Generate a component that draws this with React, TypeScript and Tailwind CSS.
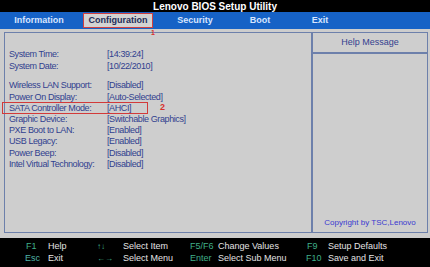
const tabs = [
  { label: 'Information', w: 'w-[78px]', active: false },
  { label: 'Configuration', w: 'w-[70px]', active: true },
  { label: 'Security', w: 'w-[84px]', active: false },
  { label: 'Boot', w: 'w-[46px]', active: false },
  { label: 'Exit', w: 'w-[74px]', active: false },
]

const rowsTop = [
  ['System Time:', '[14:39:24]'],
  ['System Date:', '[10/22/2010]'],
]

const rowsBottom = [
  ['Wireless LAN Support:', '[Disabled]'],
  ['Power On Display:', '[Auto-Selected]'],
  ['SATA Controller Mode:', '[AHCI]'],
  ['Graphic Device:', '[Switchable Graphics]'],
  ['PXE Boot to LAN:', '[Enabled]'],
  ['USB Legacy:', '[Enabled]'],
  ['Power Beep:', '[Disabled]'],
  ['Intel Virtual Technology:', '[Disabled]'],
]

const Row = ({ label, value }: { label: string; value: string }) => {
  const sata = label.startsWith('SATA')
  return (
    <div className="relative flex h-[11.2px] items-center">
      <span className="w-[98px] shrink-0">{label}</span>
      <span>{value}</span>
      {sata && (
        <>
          <div className="absolute left-[-7px] top-[-1px] h-[12px] w-[146px] border border-[#d23a3a]" />
          <span className="absolute left-[151px] top-[0px] text-[9px] font-bold text-[#d8322e]">2</span>
        </>
      )}
    </div>
  )
}

export default function App() {
  return (
    <div className="flex h-[267px] w-[430px] flex-col overflow-hidden bg-[#cdcdcd] font-['Liberation_Sans',Arial,sans-serif]">
      <div className="flex h-[12px] items-center justify-center bg-black text-[10px] font-bold text-white">
        Lenovo BIOS Setup Utility
      </div>
      <div className="flex h-[17px] items-center bg-[#1662c6] text-[9px] font-bold text-[#d8e6ff]">
        {tabs.map((t) => (
          <div
            key={t.label}
            className={
              t.active
                ? `flex h-[15px] ${t.w} ml-[5px] items-center justify-center border border-[#d04040] bg-[#d3d3d3] text-[#232c58]`
                : `flex h-full ${t.w} items-center justify-center`
            }
          >
            {t.label}
          </div>
        ))}
      </div>
      <div className="relative flex-1 pt-[3px] pl-[4px] pr-[2px] pb-[5px]">
        <span className="absolute left-[151px] top-[-1px] text-[7px] font-bold text-[#d8322e]">1</span>
        <div className="flex h-full border border-[#6d80ab] bg-[#cecece]">
          <div className="flex-1 border-r-2 border-[#6d80ab] pl-[4px] pt-[16px] text-[9px] leading-none tracking-[-0.4px] text-[#31418f]">
            <div className="flex flex-col gap-[1px]">
              {rowsTop.map(([l, v]) => (
                <Row key={l} label={l} value={v} />
              ))}
            </div>
            <div className="mt-[8px] flex flex-col">
              {rowsBottom.map(([l, v]) => (
                <Row key={l} label={l} value={v} />
              ))}
            </div>
          </div>
          <div className="flex w-[114px] flex-col">
            <div className="flex h-[21px] items-center justify-center border-b-2 border-[#6d80ab] text-[9px] text-[#34418f]">
              Help Message
            </div>
            <div className="flex flex-1 items-end justify-center pb-[3px] text-[8px] text-[#3a3ad0]">
              Copyright by TSC,Lenovo
            </div>
          </div>
        </div>
      </div>
      <div className="flex h-[29px] flex-col justify-center gap-[1px] bg-black text-[9px] leading-[11px] text-[#e4e4e4]">
        <div className="flex">
          <span className="w-[48px] pl-[26px] text-[#3fae88]">F1</span>
          <span className="w-[49px]">Help</span>
          <span className="w-[26px] text-[8px] text-[#3fae88]">↑↓</span>
          <span className="w-[67px]">Select Item</span>
          <span className="w-[28px] text-[#3fae88]">F5/F6</span>
          <span className="w-[89px]">Change Values</span>
          <span className="w-[21px] text-[#3fae88]">F9</span>
          <span>Setup Defaults</span>
        </div>
        <div className="flex">
          <span className="w-[48px] pl-[25px] text-[#4fb2a6]">Esc</span>
          <span className="w-[49px]">Exit</span>
          <span className="w-[26px] text-[8px] text-[#3fae88]">←→</span>
          <span className="w-[67px]">Select Menu</span>
          <span className="w-[28px] text-[#3fae88]">Enter</span>
          <span className="w-[88px]">Select Sub Menu</span>
          <span className="w-[22px] text-[#3fae88]">F10</span>
          <span>Save and Exit</span>
        </div>
      </div>
    </div>
  )
}
